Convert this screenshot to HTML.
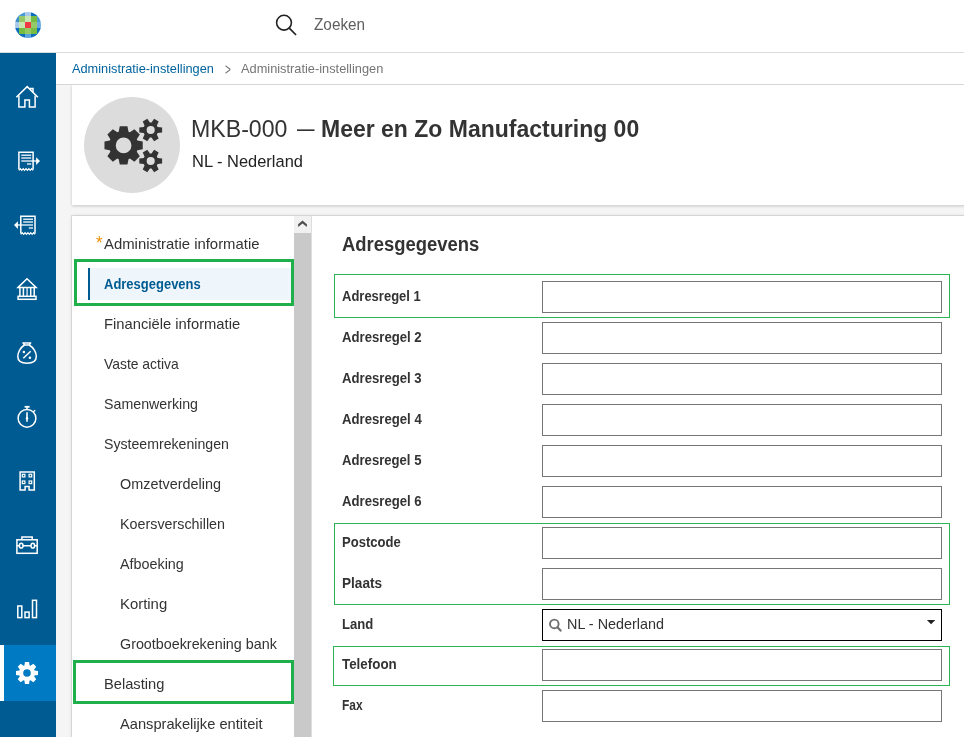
<!DOCTYPE html>
<html lang="nl"><head><meta charset="utf-8"><title>Administratie-instellingen</title>
<style>
*{box-sizing:border-box}
html,body{margin:0;padding:0}
body{width:964px;height:737px;overflow:hidden;position:relative;background:#f5f5f5;font-family:"Liberation Sans",sans-serif}
.t{position:absolute;white-space:pre;display:inline-block;transform-origin:0 50%;line-height:normal}
#hdr{position:absolute;left:0;top:0;width:964px;height:53px;background:#fff;border-bottom:1px solid #dcdcdc}
#side{position:absolute;left:0;top:53px;width:56px;height:684px;background:#005b92}
.ic{position:absolute;left:0}
.act{position:absolute;left:0;width:56px;height:56px;background:#007ac3;border-left:4px solid #fff}
#bc{position:absolute;left:56px;top:53px;width:908px;height:32px;background:#fff;border-bottom:1px solid #d6d6d6}
#card{position:absolute;left:72px;top:85px;width:900px;height:120px;background:#fff;box-shadow:0 1px 3px rgba(0,0,0,.2)}
#panel{position:absolute;left:72px;top:216px;width:900px;height:540px;background:#fff;box-shadow:0 0 0 1px rgba(0,0,0,.08),0 0 4px rgba(0,0,0,.13)}
#sb{position:absolute;left:294px;top:216px;width:18px;height:521px;background:#f1f1f1;border-right:1px solid #dedede}
#sbth{position:absolute;left:294px;top:233px;width:17px;height:504px;background:#c9c9c9}
#txt{position:absolute;left:0;top:0;width:964px;height:737px;will-change:transform}
.gb{position:absolute;border:3px solid #1fb04b}
.gl{position:absolute;border:1px solid #2db553;left:334px;width:616px}
.inp{position:absolute;left:542px;width:400px;height:32px;border:1px solid #767676;background:#fff}
</style></head><body>
<div id="hdr"></div>
<svg style="position:absolute;left:0;top:0" width="56" height="52" viewBox="0 0 56 52"><defs><clipPath id="lc"><circle cx="28" cy="25" r="13"/></clipPath></defs><g clip-path="url(#lc)"><rect x="13" y="10" width="6" height="6" fill="#0a6ebd"/><rect x="19" y="10" width="6" height="6" fill="#4d9bd6"/><rect x="25" y="10" width="6" height="6" fill="#a8c9ea"/><rect x="31" y="10" width="6" height="6" fill="#0a6ebd"/><rect x="37" y="10" width="6" height="6" fill="#0a6ebd"/><rect x="13" y="16" width="6" height="6" fill="#3b8fd0"/><rect x="19" y="16" width="6" height="6" fill="#94c966"/><rect x="25" y="16" width="6" height="6" fill="#c6e6b2"/><rect x="31" y="16" width="6" height="6" fill="#76bc43"/><rect x="37" y="16" width="6" height="6" fill="#4d9bd6"/><rect x="13" y="22" width="6" height="6" fill="#a8c9ea"/><rect x="19" y="22" width="6" height="6" fill="#c6e6b2"/><rect x="25" y="22" width="6" height="6" fill="#ee3a43"/><rect x="31" y="22" width="6" height="6" fill="#94c966"/><rect x="37" y="22" width="6" height="6" fill="#6aaade"/><rect x="13" y="28" width="6" height="6" fill="#0a6ebd"/><rect x="19" y="28" width="6" height="6" fill="#76bc43"/><rect x="25" y="28" width="6" height="6" fill="#94c966"/><rect x="31" y="28" width="6" height="6" fill="#76bc43"/><rect x="37" y="28" width="6" height="6" fill="#0a6ebd"/><rect x="13" y="34" width="6" height="6" fill="#0a6ebd"/><rect x="19" y="34" width="6" height="6" fill="#0a6ebd"/><rect x="25" y="34" width="6" height="6" fill="#5aa3dc"/><rect x="31" y="34" width="6" height="6" fill="#0a6ebd"/><rect x="37" y="34" width="6" height="6" fill="#0a6ebd"/></g></svg>
<svg style="position:absolute;left:270px;top:8px" width="32" height="32" viewBox="0 0 32 32"><circle cx="14" cy="14.7" r="7.4" fill="none" stroke="#222" stroke-width="1.6"/><path d="M19.3,20.2 L25.6,26.5" stroke="#222" stroke-width="1.7" stroke-linecap="round"/></svg>
<div id="side"></div>
<div style="position:absolute;left:0;top:53px;width:56px;height:684px">
<svg class="ic" style="top:16px" width="56" height="56" viewBox="0 0 56 56"><g stroke="#fff" fill="none" stroke-width="1.5" transform="translate(0,1)"><path d="M16.3,27.2 L27.2,16.6 L37.9,27.2" stroke-linejoin="miter"/><path d="M18.9,25.6 V37 H24.9 V29.9 H29.4 V37 H35.1 V25.6"/><path d="M30.6,19.6 V18.4 H33 V22"/></g></svg>
<svg class="ic" style="top:80px" width="56" height="56" viewBox="0 0 56 56"><g stroke="#fff" fill="none" stroke-width="1.5"><path d="M18.9,36.6 V19.3 H33.1 V36.6"/><path d="M18.9,37.4 L20.32,35.6 L21.74,37.4 L23.16,35.6 L24.58,37.4 L26.00,35.6 L27.42,37.4 L28.84,35.6 L30.26,37.4 L31.68,35.6 L33.10,37.4 " stroke-width="1.2"/><g stroke-opacity=".85"><path d="M21.3,22.2 H31.2 M21.3,24.9 H31.2 M21.3,28.1 H37.5 M27,31 H31.2" stroke-width="1.5"/></g><path d="M36.1,24.2 L40,28.1 L36.1,32 Z" fill="#fff" stroke="none"/></g></svg>
<svg class="ic" style="top:144px" width="56" height="56" viewBox="0 0 56 56"><g stroke="#fff" fill="none" stroke-width="1.5"><path d="M20.8,36.6 V19.3 H35 V36.6"/><path d="M20.8,37.4 L22.22,35.6 L23.64,37.4 L25.06,35.6 L26.48,37.4 L27.90,35.6 L29.32,37.4 L30.74,35.6 L32.16,37.4 L33.58,35.6 L35.00,37.4 " stroke-width="1.2"/><g stroke-opacity=".85"><path d="M23.2,22.2 H33 M23.2,24.9 H33 M16,28.1 H33 M28.8,31 H33" stroke-width="1.5"/></g><path d="M17.9,24.2 L14,28.1 L17.9,32 Z" fill="#fff" stroke="none"/></g></svg>
<svg class="ic" style="top:208px" width="56" height="56" viewBox="0 0 56 56"><g stroke="#fff" fill="none" stroke-width="1.5"><path d="M18.1,26.4 L27,17.8 L36.1,26.4 Z" stroke-linejoin="miter"/><path d="M19.9,26.6 V35 M23.4,26.6 V35 M30.7,26.6 V35 M34.2,26.6 V35"/><path d="M27.1,26.6 V35" stroke-opacity=".8"/><rect x="18.1" y="35.3" width="17.9" height="3"/></g></svg>
<svg class="ic" style="top:272px" width="56" height="56" viewBox="0 0 56 56"><g stroke="#fff" fill="none" stroke-width="1.5" stroke-width="1.4"><path d="M23,17.9 H30.7 L29.1,20 H24.6 Z" stroke-linejoin="round"/><path d="M24.4,20 C20.5,22.5 17.8,27.5 17.8,31.6 C17.8,36 21.5,38.3 27,38.3 C32.5,38.3 36.3,36 36.3,31.6 C36.3,27.5 33.5,22.5 29.2,20"/><path d="M23.3,33.3 L30.7,26.3"/><circle cx="23.9" cy="27" r="1.25" fill="#fff" stroke="none"/><circle cx="29.9" cy="32.7" r="1.25" fill="#fff" stroke="none"/></g></svg>
<svg class="ic" style="top:336px" width="56" height="56" viewBox="0 0 56 56"><g stroke="#fff" fill="none" stroke-width="1.5"><circle cx="27" cy="29.3" r="8.9"/><path d="M24.6,17.8 H29.6" stroke-width="1.8"/><path d="M27,18 V20.4"/><path d="M33.2,23 L35.2,21.2"/><path d="M27,23.2 V32.7" stroke-width="1.6"/><circle cx="27" cy="29.3" r="1.2" fill="#fff" stroke="none"/></g></svg>
<svg class="ic" style="top:400px" width="56" height="56" viewBox="0 0 56 56"><g stroke="#fff" fill="none" stroke-width="1.5"><path d="M25.1,37.1 H20.1 V18.9 H34.3 V37.1 H29.1 V33.4 H25.1 Z"/><g stroke-width="1.2"><rect x="22.3" y="21.3" width="2.6" height="2.6"/><rect x="29.1" y="21.3" width="2.6" height="2.6"/><rect x="22.3" y="28" width="2.6" height="2.6"/><rect x="29.1" y="28" width="2.6" height="2.6"/></g></g></svg>
<svg class="ic" style="top:464px" width="56" height="56" viewBox="0 0 56 56"><g stroke="#fff" fill="none" stroke-width="1.5" stroke-width="1.4"><rect x="16.9" y="22.8" width="20.3" height="13.5"/><path d="M21.9,22.6 V19.9 H32.2 V22.6"/><path d="M16.9,28.7 H19.4 M23,28.7 H31 M34.6,28.7 H37.2"/><ellipse cx="21.2" cy="28.7" rx="1.8" ry="2.4"/><ellipse cx="32.8" cy="28.7" rx="1.8" ry="2.4"/></g></svg>
<svg class="ic" style="top:528px" width="56" height="56" viewBox="0 0 56 56"><g stroke="#fff" fill="none" stroke-width="1.5" stroke-width="1.4"><rect x="17.8" y="25" width="4" height="11.6"/><rect x="25" y="31.1" width="4.1" height="5.5"/><rect x="32.5" y="19.3" width="4" height="17.3"/></g></svg>
<div class="act" style="top:592px"></div>
<svg class="ic" style="top:592px" width="56" height="56" viewBox="0 0 56 56"><path d="M34.57,25.40 L38.01,25.95 L38.01,30.05 L34.57,30.60 L34.19,31.51 L36.24,34.34 L33.34,37.24 L30.51,35.19 L29.60,35.57 L29.05,39.01 L24.95,39.01 L24.40,35.57 L23.49,35.19 L20.66,37.24 L17.76,34.34 L19.81,31.51 L19.43,30.60 L15.99,30.05 L15.99,25.95 L19.43,25.40 L19.81,24.49 L17.76,21.66 L20.66,18.76 L23.49,20.81 L24.40,20.43 L24.95,16.99 L29.05,16.99 L29.60,20.43 L30.51,20.81 L33.34,18.76 L36.24,21.66 L34.19,24.49Z M30.80,28.00 A3.8,3.8 0 1,0 23.20,28.00 A3.8,3.8 0 1,0 30.80,28.00Z" fill="#fff" fill-rule="evenodd"/></svg>
</div>
<div id="card"></div>
<div id="bc"></div>
<svg style="position:absolute;left:84px;top:97px" width="96" height="96" viewBox="0 0 96 96"><circle cx="48" cy="48" r="48" fill="#dcdcdc"/><path d="M53.35,43.50 L58.72,44.55 L58.72,52.25 L53.35,53.30 L52.79,54.66 L55.84,59.19 L50.39,64.64 L45.86,61.59 L44.50,62.15 L43.45,67.52 L35.75,67.52 L34.70,62.15 L33.34,61.59 L28.81,64.64 L23.36,59.19 L26.41,54.66 L25.85,53.30 L20.48,52.25 L20.48,44.55 L25.85,43.50 L26.41,42.14 L23.36,37.61 L28.81,32.16 L33.34,35.21 L34.70,34.65 L35.75,29.28 L43.45,29.28 L44.50,34.65 L45.86,35.21 L50.39,32.16 L55.84,37.61 L52.79,42.14Z M47.45,48.40 A7.85,7.85 0 1,0 31.75,48.40 A7.85,7.85 0 1,0 47.45,48.40Z M73.64,29.90 L78.11,30.40 L78.11,35.60 L73.64,36.10 L72.85,37.46 L74.66,41.58 L70.15,44.18 L67.48,40.56 L65.92,40.56 L63.25,44.18 L58.74,41.58 L60.55,37.46 L59.76,36.10 L55.29,35.60 L55.29,30.40 L59.76,29.90 L60.55,28.54 L58.74,24.42 L63.25,21.82 L65.92,25.44 L67.48,25.44 L70.15,21.82 L74.66,24.42 L72.85,28.54Z M70.75,33.00 A4.05,4.05 0 1,0 62.65,33.00 A4.05,4.05 0 1,0 70.75,33.00Z M73.64,60.90 L78.11,61.40 L78.11,66.60 L73.64,67.10 L72.85,68.46 L74.66,72.58 L70.15,75.18 L67.48,71.56 L65.92,71.56 L63.25,75.18 L58.74,72.58 L60.55,68.46 L59.76,67.10 L55.29,66.60 L55.29,61.40 L59.76,60.90 L60.55,59.54 L58.74,55.42 L63.25,52.82 L65.92,56.44 L67.48,56.44 L70.15,52.82 L74.66,55.42 L72.85,59.54Z M70.75,64.00 A4.05,4.05 0 1,0 62.65,64.00 A4.05,4.05 0 1,0 70.75,64.00Z" fill="#333" fill-rule="evenodd"/></svg>
<div id="panel"></div>
<div id="sb"></div><div id="sbth"></div>
<svg style="position:absolute;left:294px;top:216px" width="17" height="17" viewBox="0 0 17 17"><path d="M4.1,8.2 L8.5,4.6 L12.9,8.2 V11 L8.5,7.5 L4.1,11 Z" fill="#505050"/></svg>
<div class="gb" style="left:74px;top:259px;width:220px;height:47px"></div>
<div style="position:absolute;left:88px;top:268px;width:203px;height:32px;background:#eff6fb;border-left:2px solid #005b92"></div>
<div class="gb" style="left:73px;top:660px;width:221px;height:44px"></div>
<div class="gl" style="top:274px;height:44px"></div>
<div class="gl" style="top:523px;height:82px"></div>
<div class="gl" style="top:646px;height:40px;left:333px;width:617px"></div>
<div class="inp" style="top:281px"></div>
<div class="inp" style="top:322px"></div>
<div class="inp" style="top:363px"></div>
<div class="inp" style="top:404px"></div>
<div class="inp" style="top:445px"></div>
<div class="inp" style="top:486px"></div>
<div class="inp" style="top:527px"></div>
<div class="inp" style="top:568px"></div>
<div class="inp" style="top:649px"></div>
<div class="inp" style="top:690px"></div>
<div class="inp" style="top:609px;border-color:#000"></div>
<svg style="position:absolute;left:546px;top:616px" width="18" height="18" viewBox="0 0 18 18"><circle cx="8.3" cy="7.9" r="4.3" fill="none" stroke="#707070" stroke-width="1.9"/><path d="M11.4,11.2 L14.6,14.6" stroke="#707070" stroke-width="2.2" stroke-linecap="round"/></svg>
<svg style="position:absolute;left:926px;top:619px" width="10" height="6" viewBox="0 0 10 6"><path d="M0.9,1 H9.3 L5.1,5.3 Z" fill="#222"/></svg>
<div id="txt">
<span class="t" style="left:313.85px;top:14.62px;font-size:17px;font-weight:400;color:#5f5f5f;transform:scaleX(0.9014);">Zoeken</span>
<span class="t" style="left:72.20px;top:61.23px;font-size:13px;font-weight:400;color:#00639e;transform:scaleX(0.9816);">Administratie-instellingen</span>
<span class="t" style="left:225.36px;top:59.82px;font-size:17px;font-weight:400;color:#6a6a6a;transform:scaleX(0.5882);">></span>
<span class="t" style="left:241.40px;top:61.23px;font-size:13px;font-weight:400;color:#757575;transform:scaleX(0.9843);">Administratie-instellingen</span>
<span class="t" style="left:191.31px;top:115.28px;font-size:24px;font-weight:400;color:#333;transform:scaleX(0.9641);">MKB-000</span>
<span class="t" style="left:297.00px;top:114.28px;font-size:24px;font-weight:400;color:#333;transform:scaleX(0.7292);">—</span>
<span class="t" style="left:320.56px;top:115.28px;font-size:24px;font-weight:700;color:#333;transform:scaleX(0.9583);">Meer en Zo Manufacturing 00</span>
<span class="t" style="left:192.14px;top:152.25px;font-size:16.3px;font-weight:400;color:#222;transform:scaleX(1.0102);">NL - Nederland</span>
<span class="t" style="left:104.10px;top:235.43px;font-size:15px;font-weight:400;color:#333;transform:scaleX(0.9920);">Administratie informatie</span>
<span class="t" style="left:103.67px;top:275.43px;font-size:15px;font-weight:700;color:#005b92;transform:scaleX(0.8659);">Adresgegevens</span>
<span class="t" style="left:103.72px;top:315.43px;font-size:15px;font-weight:400;color:#333;transform:scaleX(0.9835);">Financiële informatie</span>
<span class="t" style="left:104.10px;top:355.43px;font-size:15px;font-weight:400;color:#333;transform:scaleX(0.9263);">Vaste activa</span>
<span class="t" style="left:103.69px;top:395.43px;font-size:15px;font-weight:400;color:#333;transform:scaleX(0.9477);">Samenwerking</span>
<span class="t" style="left:103.69px;top:435.43px;font-size:15px;font-weight:400;color:#333;transform:scaleX(0.9420);">Systeemrekeningen</span>
<span class="t" style="left:119.98px;top:475.43px;font-size:15px;font-weight:400;color:#333;transform:scaleX(0.9614);">Omzetverdeling</span>
<span class="t" style="left:120.05px;top:515.42px;font-size:15px;font-weight:400;color:#333;transform:scaleX(0.9543);">Koersverschillen</span>
<span class="t" style="left:120.40px;top:555.42px;font-size:15px;font-weight:400;color:#333;transform:scaleX(0.9567);">Afboeking</span>
<span class="t" style="left:120.01px;top:595.42px;font-size:15px;font-weight:400;color:#333;transform:scaleX(0.9923);">Korting</span>
<span class="t" style="left:119.98px;top:635.42px;font-size:15px;font-weight:400;color:#333;transform:scaleX(0.9547);">Grootboekrekening bank</span>
<span class="t" style="left:103.92px;top:675.42px;font-size:15px;font-weight:400;color:#333;transform:scaleX(0.9774);">Belasting</span>
<span class="t" style="left:120.40px;top:715.42px;font-size:15px;font-weight:400;color:#333;transform:scaleX(0.9774);">Aansprakelijke entiteit</span>
<span class="t" style="left:95.78px;top:232.31px;font-size:19px;font-weight:400;color:#ea900a;transform:scaleX(0.8889);">*</span>
<span class="t" style="left:341.83px;top:233.26px;font-size:19.6px;font-weight:700;color:#333;transform:scaleX(0.9402);">Adresgegevens</span>
<span class="t" style="left:341.74px;top:288.05px;font-size:14.2px;font-weight:700;color:#333;transform:scaleX(0.9161);">Adresregel 1</span>
<span class="t" style="left:341.74px;top:329.05px;font-size:14.2px;font-weight:700;color:#333;transform:scaleX(0.9271);">Adresregel 2</span>
<span class="t" style="left:341.74px;top:370.05px;font-size:14.2px;font-weight:700;color:#333;transform:scaleX(0.9271);">Adresregel 3</span>
<span class="t" style="left:341.74px;top:411.05px;font-size:14.2px;font-weight:700;color:#333;transform:scaleX(0.9275);">Adresregel 4</span>
<span class="t" style="left:341.74px;top:452.05px;font-size:14.2px;font-weight:700;color:#333;transform:scaleX(0.9243);">Adresregel 5</span>
<span class="t" style="left:341.74px;top:493.05px;font-size:14.2px;font-weight:700;color:#333;transform:scaleX(0.9271);">Adresregel 6</span>
<span class="t" style="left:342.11px;top:534.05px;font-size:14.2px;font-weight:700;color:#333;transform:scaleX(0.9195);">Postcode</span>
<span class="t" style="left:342.08px;top:575.05px;font-size:14.2px;font-weight:700;color:#333;transform:scaleX(0.9580);">Plaats</span>
<span class="t" style="left:342.11px;top:616.05px;font-size:14.2px;font-weight:700;color:#333;transform:scaleX(0.9240);">Land</span>
<span class="t" style="left:342.20px;top:656.15px;font-size:14.2px;font-weight:700;color:#333;transform:scaleX(0.9432);">Telefoon</span>
<span class="t" style="left:342.17px;top:696.85px;font-size:14.2px;font-weight:700;color:#333;transform:scaleX(0.8426);">Fax</span>
<span class="t" style="left:566.81px;top:615.79px;font-size:14.6px;font-weight:400;color:#333;transform:scaleX(0.9865);">NL - Nederland</span>
</div>
</body></html>
